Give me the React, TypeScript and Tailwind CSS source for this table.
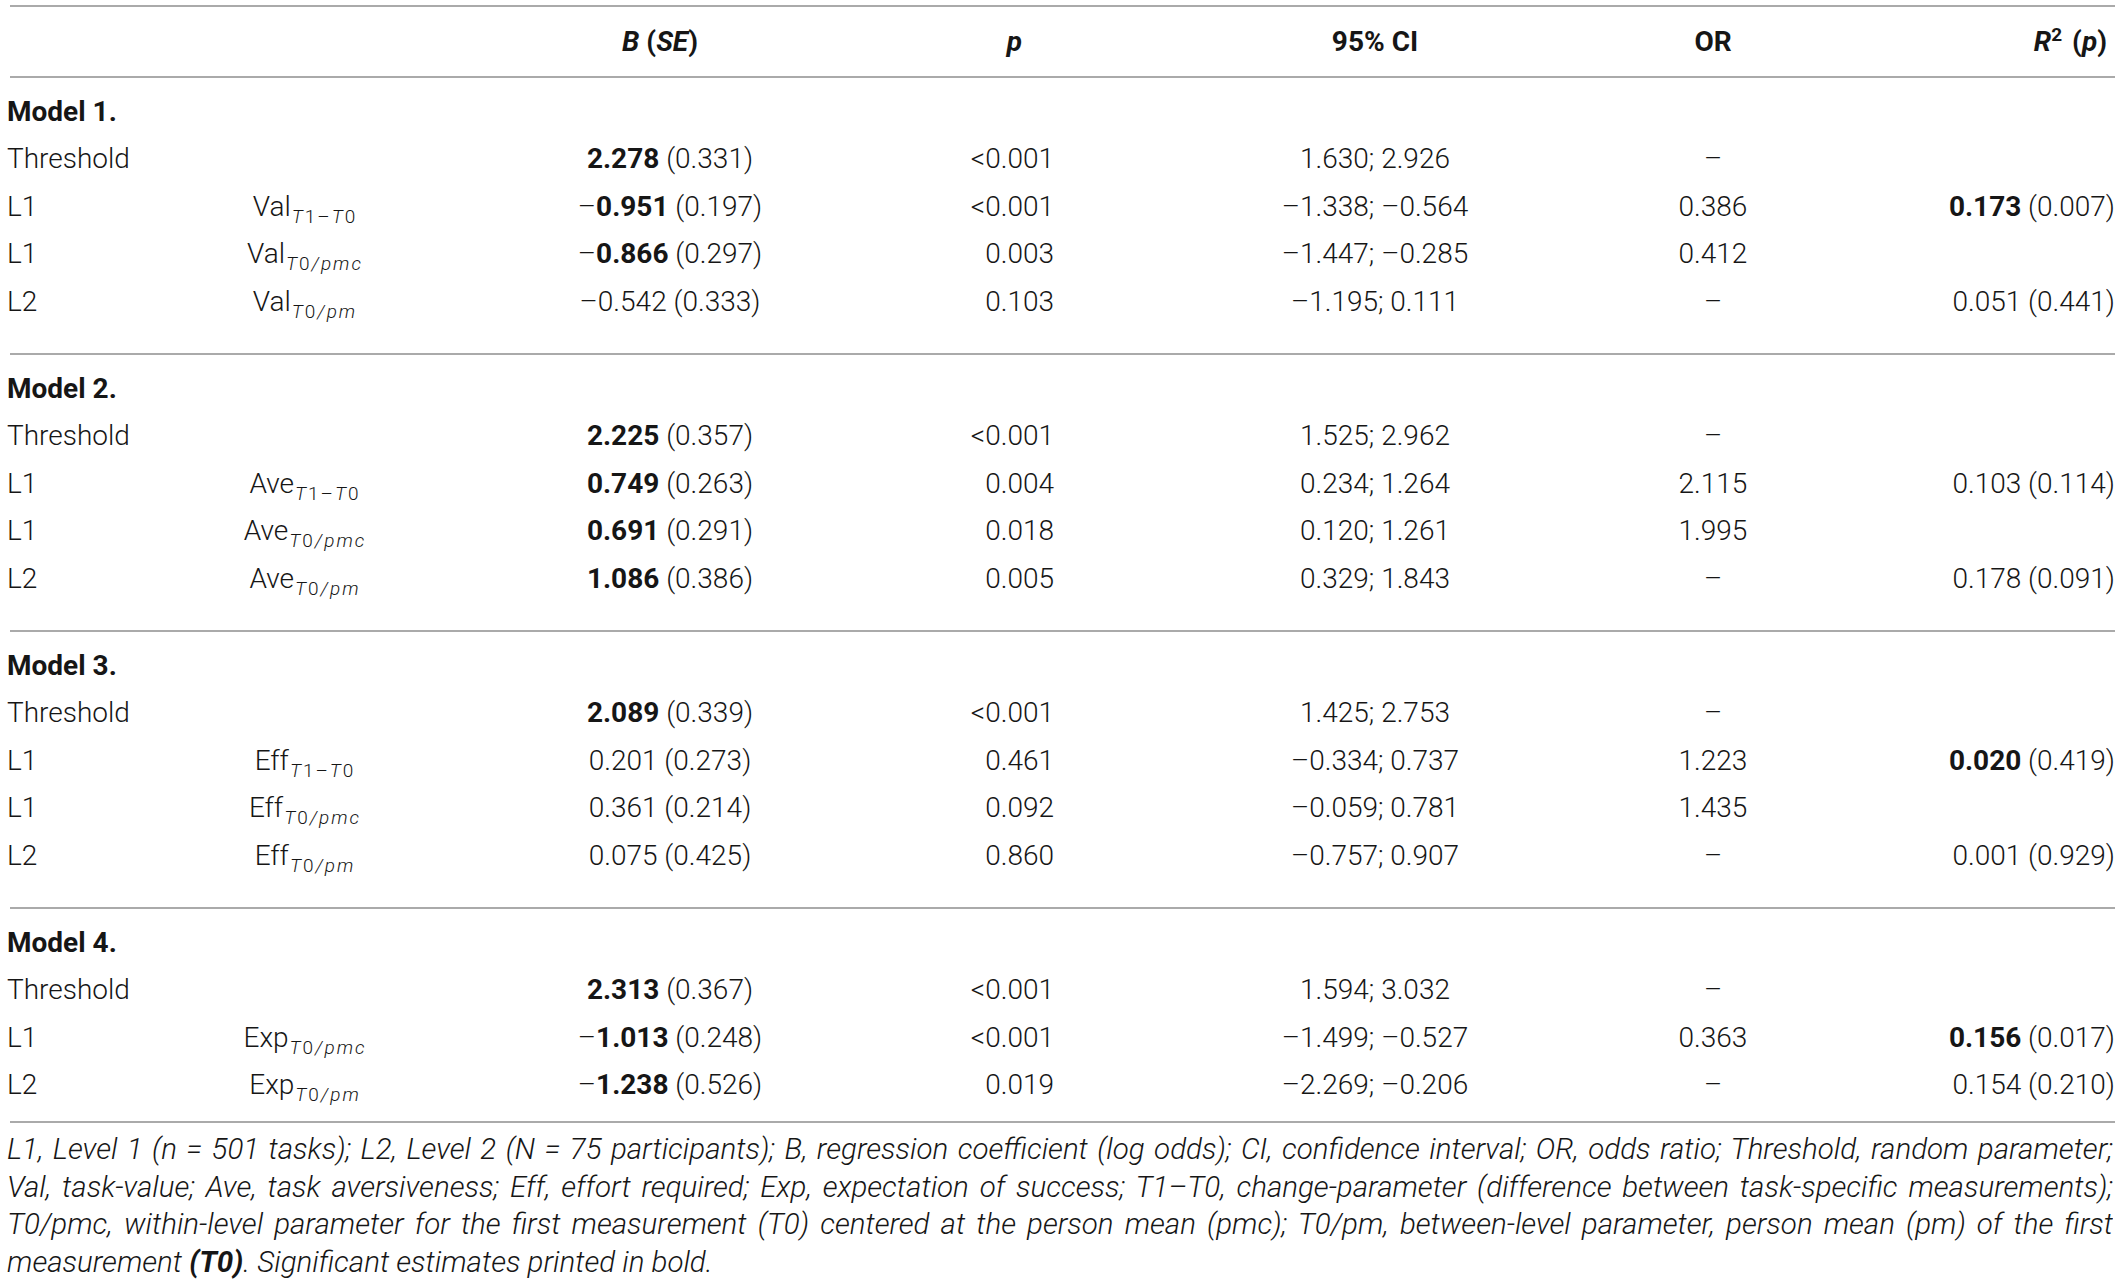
import React from "react";

type Cell = React.ReactNode;
type Row = [Cell, Cell, Cell, Cell, Cell, Cell, Cell];

const Bd = ({ children }: { children: React.ReactNode }) => <span className="font-bold">{children}</span>;

const Sub = ({ kind }: { kind: "d" | "pmc" | "pm" }) => (
  <span className="relative top-[7px] text-[19px] tracking-[2px] ml-[1px]">
    {kind === "d" ? (
      <>
        <i>T</i>1–<i>T</i>0
      </>
    ) : (
      <>
        <i>T</i>0<i>/{kind}</i>
      </>
    )}
  </span>
);

const V = (name: string, kind: "d" | "pmc" | "pm") => (
  <span>
    {name}
    <Sub kind={kind} />
  </span>
);

const grid = "grid grid-cols-[193px_210px_520px_124px_491px_336px_234px] items-center";

const Line = () => <div className="h-[2px] bg-[#aaaaaa] ml-[3px]" />;

const RowView = ({ r }: { r: Row }) => (
  <div className={`${grid} h-[47.5px] whitespace-nowrap`}>
    <div className="text-left">{r[0]}</div>
    <div className="text-center">{r[1]}</div>
    <div className="text-center">{r[2]}</div>
    <div className="text-right">{r[3]}</div>
    <div className="text-center pl-[151px]">{r[4]}</div>
    <div className="text-center">{r[5]}</div>
    <div className="text-right">{r[6]}</div>
  </div>
);

const Section = ({ title, rows, last }: { title: string; rows: Row[]; last?: boolean }) => (
  <>
    <div className={`pt-[10px] ${last ? "pb-[12px]" : "pb-[27.5px]"}`}>
      <div className="h-[47.5px] flex items-center font-bold">{title}</div>
      {rows.map((r, i) => (
        <RowView key={i} r={r} />
      ))}
    </div>
    <Line />
  </>
);

const m1: Row[] = [
  ["Threshold", "", <><Bd>2.278</Bd> (0.331)</>, "<0.001", "1.630; 2.926", "–", ""],
  ["L1", V("Val", "d"), <>–<Bd>0.951</Bd> (0.197)</>, "<0.001", "–1.338; –0.564", "0.386", <><Bd>0.173</Bd> (0.007)</>],
  ["L1", V("Val", "pmc"), <>–<Bd>0.866</Bd> (0.297)</>, "0.003", "–1.447; –0.285", "0.412", ""],
  ["L2", V("Val", "pm"), "–0.542 (0.333)", "0.103", "–1.195; 0.111", "–", "0.051 (0.441)"],
];

const m2: Row[] = [
  ["Threshold", "", <><Bd>2.225</Bd> (0.357)</>, "<0.001", "1.525; 2.962", "–", ""],
  ["L1", V("Ave", "d"), <><Bd>0.749</Bd> (0.263)</>, "0.004", "0.234; 1.264", "2.115", "0.103 (0.114)"],
  ["L1", V("Ave", "pmc"), <><Bd>0.691</Bd> (0.291)</>, "0.018", "0.120; 1.261", "1.995", ""],
  ["L2", V("Ave", "pm"), <><Bd>1.086</Bd> (0.386)</>, "0.005", "0.329; 1.843", "–", "0.178 (0.091)"],
];

const m3: Row[] = [
  ["Threshold", "", <><Bd>2.089</Bd> (0.339)</>, "<0.001", "1.425; 2.753", "–", ""],
  ["L1", V("Eff", "d"), "0.201 (0.273)", "0.461", "–0.334; 0.737", "1.223", <><Bd>0.020</Bd> (0.419)</>],
  ["L1", V("Eff", "pmc"), "0.361 (0.214)", "0.092", "–0.059; 0.781", "1.435", ""],
  ["L2", V("Eff", "pm"), "0.075 (0.425)", "0.860", "–0.757; 0.907", "–", "0.001 (0.929)"],
];

const m4: Row[] = [
  ["Threshold", "", <><Bd>2.313</Bd> (0.367)</>, "<0.001", "1.594; 3.032", "–", ""],
  ["L1", V("Exp", "pmc"), <>–<Bd>1.013</Bd> (0.248)</>, "<0.001", "–1.499; –0.527", "0.363", <><Bd>0.156</Bd> (0.017)</>],
  ["L2", V("Exp", "pm"), <>–<Bd>1.238</Bd> (0.526)</>, "0.019", "–2.269; –0.206", "–", "0.154 (0.210)"],
];

const FootLine = ({ children }: { children: React.ReactNode }) => (
  <div className="h-[37.5px] leading-[37.5px] text-justify [text-align-last:justify] overflow-hidden">
    {children}
  </div>
);

export default function App() {
  return (
    <div className="w-[2122px] h-[1282px] bg-white text-[#161616] font-['Roboto','Liberation_Sans',sans-serif] font-light text-[28px] leading-none pl-[7px] pt-[5px] overflow-hidden">
      <div className="w-[2108px]">
        <Line />
        <div className={`${grid} h-[69px] font-bold whitespace-nowrap`}>
          <div />
          <div />
          <div className="text-center pr-[20px]">
            <i>B</i> (<i>SE</i>)
          </div>
          <div className="text-right pr-[32px]">
            <i>p</i>
          </div>
          <div className="text-center pl-[151px]">95% CI</div>
          <div className="text-center">OR</div>
          <div className="text-right pr-[8px]">
            <i>R</i>
            <sup className="text-[19px]">2</sup>
            <span className="ml-[10px]">
              (<i>p</i>)
            </span>
          </div>
        </div>
        <Line />
        <Section title="Model 1." rows={m1} />
        <Section title="Model 2." rows={m2} />
        <Section title="Model 3." rows={m3} />
        <Section title="Model 4." rows={m4} last />
        <div className="pt-[8px] italic text-[29.5px] w-[2106px]">
          <FootLine>
            L1, Level 1 (n = 501 tasks); L2, Level 2 (N = 75 participants); B, regression coefficient (log odds); CI, confidence interval; OR, odds ratio; Threshold, random parameter;
          </FootLine>
          <FootLine>
            Val, task-value; Ave, task aversiveness; Eff, effort required; Exp, expectation of success; T1–T0, change-parameter (difference between task-specific measurements);
          </FootLine>
          <FootLine>
            T0/pmc, within-level parameter for the first measurement (T0) centered at the person mean (pmc); T0/pm, between-level parameter, person mean (pm) of the first
          </FootLine>
          <div className="h-[37.5px] leading-[37.5px] whitespace-nowrap">
            measurement <span className="font-bold">(T0)</span>. Significant estimates printed in bold.
          </div>
        </div>
      </div>
    </div>
  );
}
